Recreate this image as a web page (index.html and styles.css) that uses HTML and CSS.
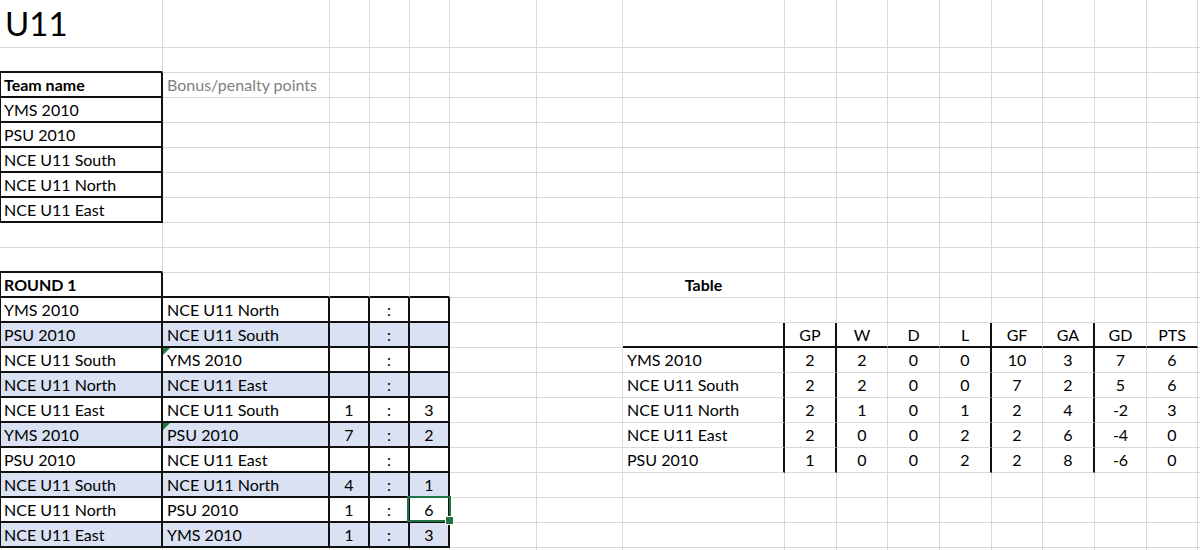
FILE: index.html
```html
<!DOCTYPE html>
<html lang="en">
<head>
<meta charset="utf-8">
<title>U11</title>
<link rel="stylesheet" href="styles.css">
</head>
<body>
<div class="sheet">
<!-- row 1 -->
<div class="title">U11</div><div></div><div></div><div></div><div></div><div></div><div></div><div></div><div></div><div></div><div></div><div></div><div></div><div></div><div></div><div></div><div></div>
<!-- row 2 -->
<div class="under"></div><div></div><div></div><div></div><div></div><div></div><div></div><div></div><div></div><div></div><div></div><div></div><div></div><div></div><div></div><div></div><div></div>
<!-- row 3 -->
<div class="box first bold">Team name</div><div class="muted">Bonus/penalty points</div><div></div><div></div><div></div><div></div><div></div><div></div><div></div><div></div><div></div><div></div><div></div><div></div><div></div><div></div><div></div>
<!-- row 4 -->
<div class="box first">YMS 2010</div><div></div><div></div><div></div><div></div><div></div><div></div><div></div><div></div><div></div><div></div><div></div><div></div><div></div><div></div><div></div><div></div>
<!-- row 5 -->
<div class="box first">PSU 2010</div><div></div><div></div><div></div><div></div><div></div><div></div><div></div><div></div><div></div><div></div><div></div><div></div><div></div><div></div><div></div><div></div>
<!-- row 6 -->
<div class="box first">NCE U11 South</div><div></div><div></div><div></div><div></div><div></div><div></div><div></div><div></div><div></div><div></div><div></div><div></div><div></div><div></div><div></div><div></div>
<!-- row 7 -->
<div class="box first">NCE U11 North</div><div></div><div></div><div></div><div></div><div></div><div></div><div></div><div></div><div></div><div></div><div></div><div></div><div></div><div></div><div></div><div></div>
<!-- row 8 -->
<div class="box first">NCE U11 East</div><div></div><div></div><div></div><div></div><div></div><div></div><div></div><div></div><div></div><div></div><div></div><div></div><div></div><div></div><div></div><div></div>
<!-- row 9 -->
<div></div><div></div><div></div><div></div><div></div><div></div><div></div><div></div><div></div><div></div><div></div><div></div><div></div><div></div><div></div><div></div><div></div>
<!-- row 10 -->
<div class="under"></div><div></div><div></div><div></div><div></div><div></div><div></div><div></div><div></div><div></div><div></div><div></div><div></div><div></div><div></div><div></div><div></div>
<!-- row 11 -->
<div class="box first bold">ROUND 1</div><div class="under"></div><div class="under"></div><div class="under"></div><div class="under"></div><div></div><div></div><div class="bold center">Table</div><div></div><div></div><div></div><div></div><div></div><div></div><div></div><div></div><div></div>
<!-- row 12 -->
<div class="box first">YMS 2010</div><div class="box">NCE U11 North</div><div class="box center"></div><div class="box center">:</div><div class="box center"></div><div></div><div></div><div></div><div></div><div></div><div></div><div></div><div></div><div></div><div></div><div></div><div></div>
<!-- row 13 -->
<div class="box first fill">PSU 2010</div><div class="box fill">NCE U11 South</div><div class="box center fill"></div><div class="box center fill">:</div><div class="box center fill"></div><div></div><div></div><div class="under side"></div><div class="under side center">GP</div><div class="under center">W</div><div class="under center">D</div><div class="under side center">L</div><div class="under center">GF</div><div class="under side center">GA</div><div class="under center">GD</div><div class="under center">PTS</div><div></div>
<!-- row 14 -->
<div class="box first">NCE U11 South</div><div class="box flag">YMS 2010</div><div class="box center"></div><div class="box center">:</div><div class="box center"></div><div></div><div></div><div class="side">YMS 2010</div><div class="side center">2</div><div class="center">2</div><div class="center">0</div><div class="side center">0</div><div class="center">10</div><div class="side center">3</div><div class="center">7</div><div class="center">6</div><div></div>
<!-- row 15 -->
<div class="box first fill">NCE U11 North</div><div class="box fill">NCE U11 East</div><div class="box center fill"></div><div class="box center fill">:</div><div class="box center fill"></div><div></div><div></div><div class="side">NCE U11 South</div><div class="side center">2</div><div class="center">2</div><div class="center">0</div><div class="side center">0</div><div class="center">7</div><div class="side center">2</div><div class="center">5</div><div class="center">6</div><div></div>
<!-- row 16 -->
<div class="box first">NCE U11 East</div><div class="box">NCE U11 South</div><div class="box center">1</div><div class="box center">:</div><div class="box center">3</div><div></div><div></div><div class="side">NCE U11 North</div><div class="side center">2</div><div class="center">1</div><div class="center">0</div><div class="side center">1</div><div class="center">2</div><div class="side center">4</div><div class="center">-2</div><div class="center">3</div><div></div>
<!-- row 17 -->
<div class="box first fill">YMS 2010</div><div class="box fill flag">PSU 2010</div><div class="box center fill">7</div><div class="box center fill">:</div><div class="box center fill">2</div><div></div><div></div><div class="side">NCE U11 East</div><div class="side center">2</div><div class="center">0</div><div class="center">0</div><div class="side center">2</div><div class="center">2</div><div class="side center">6</div><div class="center">-4</div><div class="center">0</div><div></div>
<!-- row 18 -->
<div class="box first">PSU 2010</div><div class="box">NCE U11 East</div><div class="box center"></div><div class="box center">:</div><div class="box center"></div><div></div><div></div><div class="side">PSU 2010</div><div class="side center">1</div><div class="center">0</div><div class="center">0</div><div class="side center">2</div><div class="center">2</div><div class="side center">8</div><div class="center">-6</div><div class="center">0</div><div></div>
<!-- row 19 -->
<div class="box first fill">NCE U11 South</div><div class="box fill">NCE U11 North</div><div class="box center fill">4</div><div class="box center fill">:</div><div class="box center fill">1</div><div></div><div></div><div></div><div></div><div></div><div></div><div></div><div></div><div></div><div></div><div></div><div></div>
<!-- row 20 -->
<div class="box first">NCE U11 North</div><div class="box">PSU 2010</div><div class="box center">1</div><div class="box center">:</div><div class="box center sel">6</div><div></div><div></div><div></div><div></div><div></div><div></div><div></div><div></div><div></div><div></div><div></div><div></div>
<!-- row 21 -->
<div class="box first fill">NCE U11 East</div><div class="box fill">YMS 2010</div><div class="box center fill">1</div><div class="box center fill">:</div><div class="box center fill">3</div><div></div><div></div><div></div><div></div><div></div><div></div><div></div><div></div><div></div><div></div><div></div><div></div>
<!-- row 22 -->
<div></div><div></div><div></div><div></div><div></div><div></div><div></div><div></div><div></div><div></div><div></div><div></div><div></div><div></div><div></div><div></div><div></div>
</div>
</body>
</html>
```
FILE: styles.css
```css
* {
  box-sizing: border-box;
}

html,
body {
  margin: 0;
  padding: 0;
  background: #ffffff;
}

body {
  width: 1200px;
  height: 550px;
  overflow: hidden;
  font-family: Lato, "Open Sans", sans-serif;
  font-size: 16px;
  color: #000000;
}

.sheet {
  display: grid;
  grid-template-columns: 163px 167px 40px 40px 40px 87px 86px 162px 52px 51px 52px 52px 51px 52px 52px 51px 60px;
  grid-template-rows: 48px repeat(20, 25px) 25px;
  width: 1260px;
}

.sheet > div {
  position: relative;
  border-right: 1px solid #d9d9d9;
  border-bottom: 1px solid #d9d9d9;
  padding: 0 4px;
  line-height: 24px;
  white-space: nowrap;
}

.sheet > .title {
  font-size: 33px;
  line-height: 47px;
  padding-left: 5px;
}

.sheet > .box {
  border-right: 2px solid #111111;
  border-bottom: 2px solid #111111;
  line-height: 23px;
}

.sheet > .first {
  border-left: 1px solid #111111;
  padding-left: 3px;
}

.sheet > .under {
  border-bottom: 2px solid #111111;
  line-height: 23px;
}

.sheet > .side {
  border-right: 2px solid #111111;
}

.sheet > .fill {
  background: #d9e1f2;
}

.bold {
  font-weight: 700;
}

.muted {
  color: #808080;
}

.center {
  text-align: center;
}

.flag::before {
  content: "";
  position: absolute;
  left: 0;
  top: 0;
  width: 0;
  height: 0;
  border-top: 7px solid #1f7a3d;
  border-right: 7px solid transparent;
}

.sheet > .sel {
  z-index: 2;
}

.sel::after {
  content: "";
  position: absolute;
  left: -3px;
  top: -2px;
  right: -3px;
  bottom: -1px;
  border: 2px solid #217346;
}

.sel::before {
  content: "";
  position: absolute;
  right: -6px;
  bottom: -4px;
  width: 7px;
  height: 7px;
  background: #217346;
  border: 1px solid #ffffff;
  z-index: 1;
}
```
